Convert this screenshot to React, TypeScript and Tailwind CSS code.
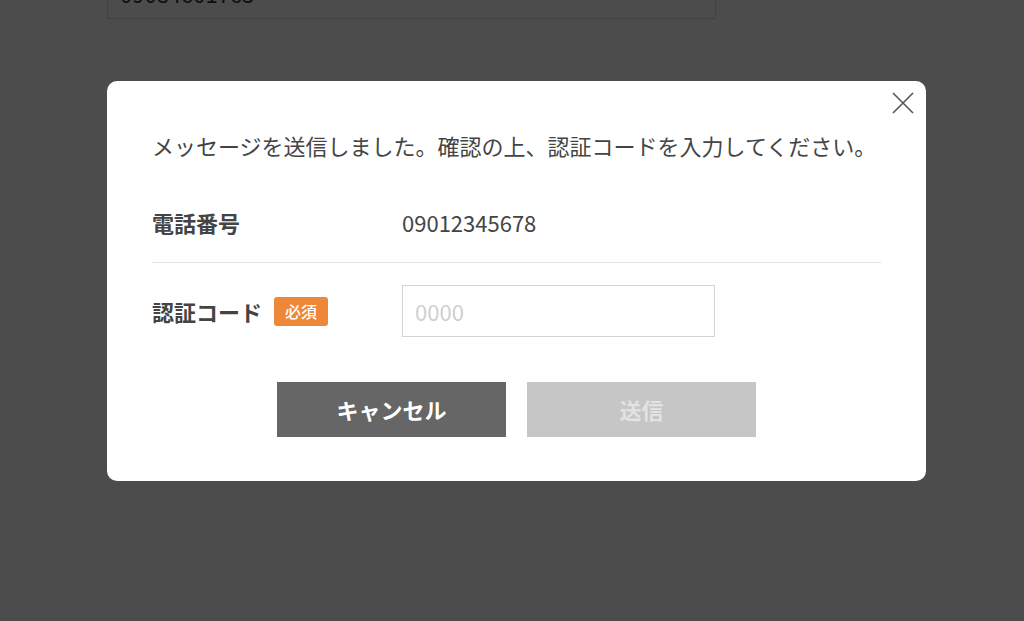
import { useState } from 'react'

const jp = { fontFamily: '"Noto Sans CJK JP", "Noto Sans", sans-serif' }

export default function App() {
  const [code, setCode] = useState('')

  return (
    <div className="relative h-[621px] w-[1024px] overflow-hidden bg-white" style={jp}>
      {/* page behind the dialog */}
      <div className="-mt-[33px] pl-[107px]">
        <div className="flex h-[52px] w-[609px] items-center border border-[#dcdcdc] px-[12px] text-[22px] text-[#333]">
          09084601763
        </div>
      </div>

      {/* overlay */}
      <div className="fixed inset-0 bg-black/70">
        <div className="pt-[81px] pl-[107px]">
          <div className="relative w-[819px] rounded-[10px] bg-white px-[45px] pt-[44px] pb-[44px] text-[#444]">
            <button className="absolute right-[11px] top-[10px] flex h-[24px] w-[24px] items-center justify-center text-[#555]">
              <svg viewBox="0 0 24 24" className="h-[24px] w-[24px]" fill="none" stroke="currentColor" strokeWidth="1.6">
                <path d="M2 2L22 22M22 2L2 22" />
              </svg>
            </button>

            <p className="text-[22px] leading-[40px] whitespace-nowrap">
              メッセージを送信しました。確認の上、認証コードを入力してください。
            </p>

            <div className="mt-[41px] flex items-center border-b border-[#e2e2e2] pb-[24px]">
              <div className="w-[250px] text-[22px] font-bold leading-[32px]">電話番号</div>
              <div className="text-[22px] leading-[32px]">09012345678</div>
            </div>

            <div className="flex items-center py-[22px]">
              <div className="flex w-[250px] items-center gap-[12px]">
                <span className="text-[22px] font-bold leading-[32px]">認証コード</span>
                <span className="rounded-[3px] bg-[#ef873a] px-[11px] text-[16px] font-medium leading-[29px] text-white">
                  必須
                </span>
              </div>
              <input
                value={code}
                onChange={(e) => setCode(e.target.value)}
                placeholder="0000"
                className="h-[52px] w-[313px] border border-[#d4d4d4] px-[12px] text-[22px] text-[#444] outline-none placeholder:text-[#cfcfcf]"
                style={jp}
              />
            </div>

            <div className="mt-[23px] flex justify-center gap-[21px]">
              <button className="h-[55px] w-[229px] bg-[#666] text-[22px] font-bold text-white">キャンセル</button>
              <button disabled className="h-[55px] w-[229px] bg-[#c6c6c6] text-[22px] font-bold text-[#e2e2e2]">
                送信
              </button>
            </div>
          </div>
        </div>
      </div>
    </div>
  )
}
